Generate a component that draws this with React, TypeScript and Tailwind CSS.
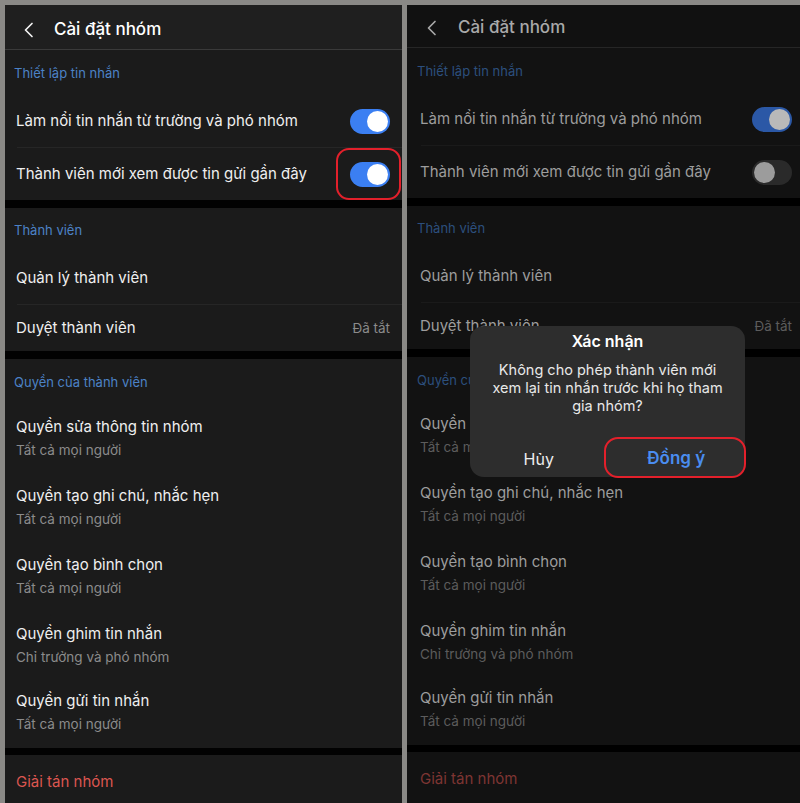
import React from "react";

type V = "light" | "dim";

const font = { fontFamily: "Inter, 'Noto Sans', 'Liberation Sans', sans-serif" };

function Toggle({ on, v }: { on: boolean; v: V }) {
  if (v === "light") {
    return (
      <div className="w-[40px] h-[25px] rounded-full bg-[#3b7ff2] flex items-center justify-end p-[2px]">
        <div className="w-[21px] h-[21px] rounded-full bg-white" />
      </div>
    );
  }
  return on ? (
    <div className="w-[40px] h-[25px] rounded-full bg-[#2b58a6] flex items-center justify-end p-[2px]">
      <div className="w-[21px] h-[21px] rounded-full bg-[#b9b9b9]" />
    </div>
  ) : (
    <div className="w-[40px] h-[25px] rounded-full bg-[#2a2a2a] flex items-center justify-start p-[2px]">
      <div className="w-[21px] h-[21px] rounded-full bg-[#9c9c9c]" />
    </div>
  );
}

function Panel({ v }: { v: V }) {
  const L = v === "light";
  const hdr = L ? "bg-[#1f1f1f]" : "bg-[#111111]";
  const row = L ? "bg-[#1b1b1b]" : "bg-[#121212]";
  const gap = L ? "bg-[#020202]" : "bg-[#000000]";
  const txt = L ? "text-[#efefef]" : "text-[#9d9d9d]";
  const sub = L ? "text-[#8b8b8b]" : "text-[#5c5c5c]";
  const blue = L ? "text-[#4c82c6]" : "text-[#2c4f7d]";
  const red = L ? "text-[#dc5650]" : "text-[#7e3532]";
  const div = L ? "border-[#262626]" : "border-[#1a1a1a]";
  const secPad = L ? "pl-[9px]" : "pl-[10px]";
  const rowPad = L ? "pl-[11px] pr-[12px]" : "pl-[13px] pr-[8px]";

  const perms: [string, string][] = [
    ["Quyền sửa thông tin nhóm", "Tất cả mọi người"],
    ["Quyền tạo ghi chú, nhắc hẹn", "Tất cả mọi người"],
    ["Quyền tạo bình chọn", "Tất cả mọi người"],
    ["Quyền ghim tin nhắn", "Chỉ trưởng và phó nhóm"],
    ["Quyền gửi tin nhắn", "Tất cả mọi người"],
  ];

  return (
    <div className={`flex flex-col h-full ${row}`} style={font}>
      {/* Header */}
      <div
        className={`${hdr} ${L ? "h-[45px] pt-[6px]" : "h-[43px] pt-[4px]"} flex items-center border-b ${
          L ? "border-[#3a3a3a]" : "border-[#262626]"
        } shrink-0`}
      >
        <div className={`${L ? "w-[49px] pl-[18px]" : "w-[51px] pl-[19px]"} flex items-center`}>
          <svg width="11" height="16" viewBox="0 0 11 16" fill="none">
            <path
              d="M9 1.5 L2.5 8 L9 14.5"
              stroke={L ? "#f2f2f2" : "#a8a8a8"}
              strokeWidth="1.7"
              strokeLinecap="round"
              strokeLinejoin="round"
            />
          </svg>
        </div>
        <div className={`text-[17px] font-medium ${L ? "text-white" : "text-[#a9a9a9]"}`}>Cài đặt nhóm</div>
      </div>

      {/* Section 1 */}
      <div className={`${row} shrink-0`}>
        <div className={`h-[45px] ${L ? "pt-[2px]" : "pt-[3px]"} flex items-center ${secPad} text-[13px] ${blue}`}>
          Thiết lập tin nhắn
        </div>
        <div className={`h-[52px] flex items-center justify-between ${rowPad}`}>
          <span className={`text-[15px] ${txt}`}>Làm nổi tin nhắn từ trường và phó nhóm</span>
          <Toggle on v={v} />
        </div>
        <div className={`${L ? "ml-[12px]" : "ml-[14px]"} border-t ${div}`} />
        <div className={`relative h-[52px] flex items-center justify-between ${rowPad}`}>
          <span className={`text-[15px] ${txt}`}>Thành viên mới xem được tin gửi gần đây</span>
          <Toggle on={false} v={v} />
          {L && (
            <div className="absolute right-[1px] top-[0px] w-[65px] h-[52px] rounded-[13px] border-[2.5px] border-[#e3202b]" />
          )}
        </div>
      </div>
      <div className={`h-[8px] ${gap} shrink-0`} />

      {/* Section 2 */}
      <div className={`${row} shrink-0`}>
        <div className={`h-[44px] ${L ? "pt-[1px]" : "pt-[2px]"} flex items-center ${secPad} text-[13px] ${blue}`}>
          Thành viên
        </div>
        <div className={`h-[52px] flex items-center ${rowPad}`}>
          <span className={`text-[15px] ${txt}`}>Quản lý thành viên</span>
        </div>
        <div className={`${L ? "ml-[12px]" : "ml-[14px]"} border-t ${div}`} />
        <div className={`h-[46px] flex items-center justify-between ${rowPad}`}>
          <span className={`text-[15px] ${txt}`}>Duyệt thành viên</span>
          <span className={`text-[13.5px] ${sub}`}>Đã tắt</span>
        </div>
      </div>
      <div className={`h-[8px] ${gap} shrink-0`} />

      {/* Section 3 */}
      <div className={`${row} shrink-0`}>
        <div
          className={`${L ? "h-[46px] pt-[2px]" : "h-[45px] pt-[3px]"} flex items-center ${secPad} text-[13px] ${blue}`}
        >
          Quyền của thành viên
        </div>
        {perms.map(([t, s], i) => (
          <div
            key={t}
            className={`${i === 4 ? "h-[67px]" : "h-[69px]"} flex flex-col justify-center ${rowPad} ${
              i === 4 ? "pb-[4px]" : "pb-[3px]"
            }`}
          >
            <span className={`text-[15px] leading-[20px] ${txt}`}>{t}</span>
            <span className={`text-[13.5px] leading-[19px] mt-[4px] ${sub}`}>{s}</span>
          </div>
        ))}
      </div>
      <div className={`h-[7px] ${gap} shrink-0`} />

      {/* Section 4 */}
      <div className={`${row} h-[54px] flex items-center ${rowPad} shrink-0`}>
        <span className={`text-[15px] ${red}`}>Giải tán nhóm</span>
      </div>
      <div className="flex-1" />
    </div>
  );
}

export default function App() {
  return (
    <div className="w-[800px] h-[803px] bg-[#8a8986] overflow-hidden flex pt-[5px] pl-[5px] gap-[5px]">
      <div className="w-[397px] h-full overflow-hidden shrink-0">
        <Panel v="light" />
      </div>
      <div className="flex-1 h-full overflow-hidden relative">
        <Panel v="dim" />
        {/* Dialog */}
        <div
          className="absolute left-[63px] top-[321px] w-[275px] h-[151px] rounded-[14px] bg-[#2d2d2d] flex flex-col"
          style={font}
        >
          <div className="pt-[2px] h-[28px] flex items-center justify-center text-[16px] font-semibold text-white">
            Xác nhận
          </div>
          <div className="px-[18px] pt-[7px] text-center text-[14.5px] leading-[18px] text-[#e8e8e8]">
            Không cho phép thành viên mới xem lại tin nhắn trước khi họ tham gia nhóm?
          </div>
          <div className="flex-1" />
          <div className="flex h-[36px]">
            <div className="flex-1 flex items-center justify-center text-[16px] text-[#ececec]">Hủy</div>
            <div className="flex-1 flex items-center justify-center text-[17px] font-semibold text-[#4a8df0]">
              Đồng ý
            </div>
          </div>
          <div className="absolute left-[134px] top-[111px] w-[142px] h-[41px] rounded-[14px] border-[2.5px] border-[#e3202b]" />
        </div>
      </div>
    </div>
  );
}
